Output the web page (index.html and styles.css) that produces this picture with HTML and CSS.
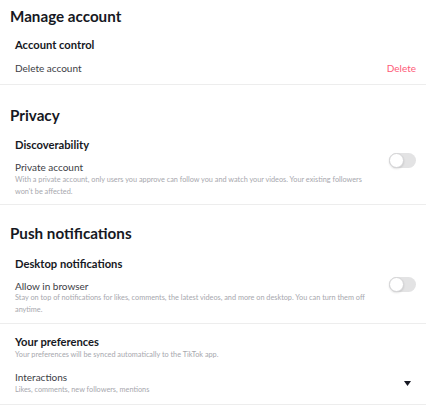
FILE: index.html
```html
<!DOCTYPE html>
<html>
<head>
<meta charset="utf-8">
<link rel="stylesheet" href="styles.css">
</head>
<body>
<div class="page">
  <section class="section s-manage">
    <h2 class="title">Manage account</h2>
    <h3 class="sub">Account control</h3>
    <div class="row row-delete">
      <span class="label">Delete account</span>
      <span class="danger">Delete</span>
    </div>
  </section>

  <section class="section s-privacy">
    <h2 class="title">Privacy</h2>
    <h3 class="sub">Discoverability</h3>
    <div class="row row-toggle">
      <div class="text">
        <div class="label">Private account</div>
        <div class="desc">With a private account, only users you approve can follow you and watch your videos. Your existing followers won't be affected.</div>
      </div>
      <span class="toggle t1"><span class="knob"></span></span>
    </div>
  </section>

  <section class="section s-push">
    <h2 class="title">Push notifications</h2>
    <h3 class="sub">Desktop notifications</h3>
    <div class="row row-toggle">
      <div class="text">
        <div class="label">Allow in browser</div>
        <div class="desc">Stay on top of notifications for likes, comments, the latest videos, and more on desktop. You can turn them off anytime.</div>
      </div>
      <span class="toggle t2"><span class="knob"></span></span>
    </div>
  </section>

  <section class="section s-pref">
    <h3 class="sub">Your preferences</h3>
    <div class="desc">Your preferences will be synced automatically to the TikTok app.</div>
    <div class="row row-select">
      <div class="text">
        <div class="label">Interactions</div>
        <div class="desc">Likes, comments, new followers, mentions</div>
      </div>
      <svg class="caret" width="7" height="5" viewBox="0 0 7 5"><path d="M0 0H7L3.5 5Z" fill="#161823"/></svg>
    </div>
  </section>
</div>
</body>
</html>
```

FILE: styles.css
```css
* { box-sizing: border-box; }
html, body { margin: 0; padding: 0; background: #fff; }
body {
  font-family: "Lato", "Open Sans", "Liberation Sans", sans-serif;
  color: #161823;
  width: 434px;
  height: 413px;
  overflow: hidden;
}
.page { width: 426px; }
.section {
  border-bottom: 1px solid #ededed;
  padding-left: 10px;
  padding-right: 10px;
}
.title {
  margin: 0;
  font-size: 15.2px;
  font-weight: 700;
  line-height: 24px;
}
.sub {
  margin: 0;
  padding-left: 5px;
  font-size: 11.2px;
  font-weight: 700;
  line-height: 18px;
  color: #161823;
}
.row {
  display: flex;
  justify-content: space-between;
  align-items: flex-start;
  padding-left: 5px;
}
.label {
  font-size: 10px;
  line-height: 14px;
  color: #3c3d45;
}
.desc {
  font-size: 7.3px;
  line-height: 12px;
  color: #a7a8ae;
}
.text { flex: 1; padding-right: 8px; }
.danger {
  font-size: 10px;
  line-height: 14px;
  color: #fe5a78;
}

.s-manage { padding-top: 4px; padding-bottom: 9px; }
.s-manage .sub { margin-top: 8px; }
.row-delete { margin-top: 7px; }

.s-privacy { padding-top: 18px; padding-bottom: 6px; }
.s-privacy .sub { margin-top: 9px; }
.s-privacy .row { margin-top: 6px; }

.s-push { padding-top: 16px; padding-bottom: 7px; }
.s-push .sub { margin-top: 10px; }
.s-push .row { margin-top: 6px; }
.s-push .desc { margin-top: -1px; }

.s-pref { padding-top: 9px; padding-bottom: 8px; }
.s-pref > .desc { padding-left: 5px; margin-top: -2px; }
.row-select { margin-top: 9px; align-items: center; }
.caret { margin-right: 5px; }

.toggle {
  position: relative;
  flex: none;
  width: 27px;
  height: 15px;
  border-radius: 8px;
  background: #e3e3e4;
}
.t1 { margin-top: -7px; }
.t2 { margin-top: -2px; }
.knob {
  position: absolute;
  left: 0;
  top: 0;
  width: 15px;
  height: 15px;
  border-radius: 50%;
  background: #fff;
  border: 1px solid #d4d4d6;
  box-shadow: 0 1px 2px rgba(0,0,0,0.12);
}
```
